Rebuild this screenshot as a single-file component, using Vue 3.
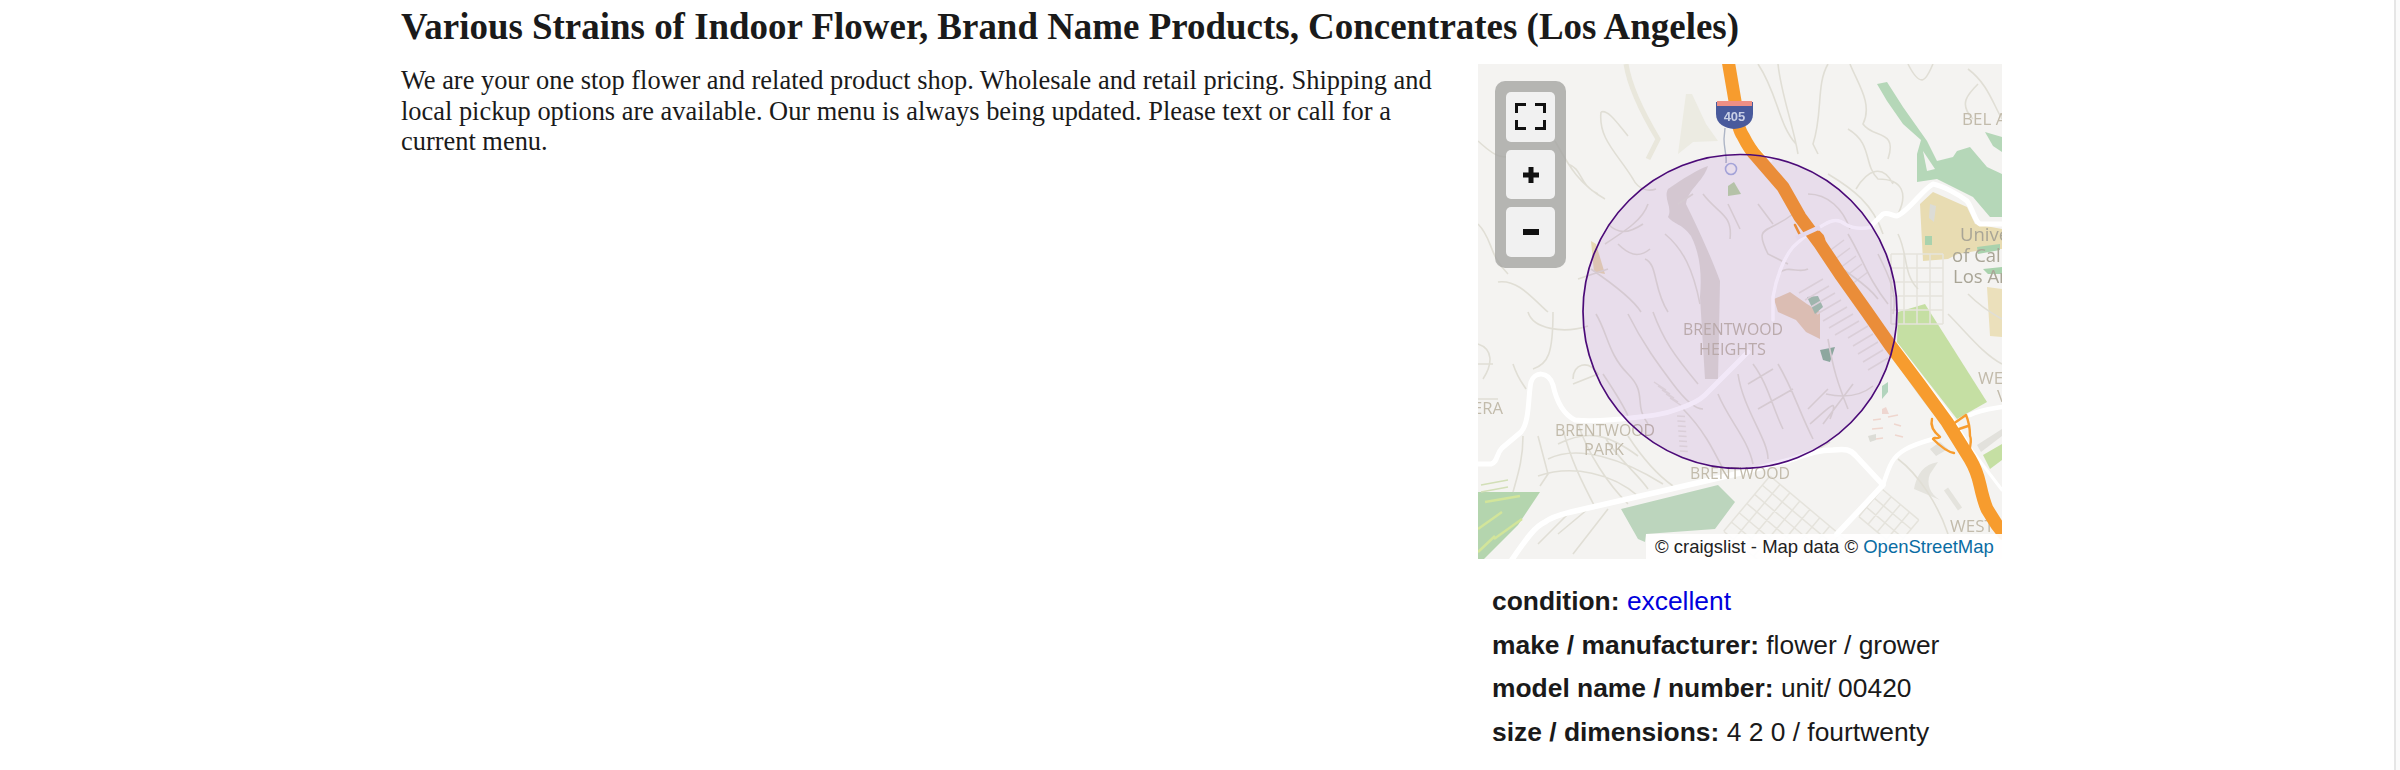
<script setup>
const attrs = [
  { k: 'condition:', v: 'excellent', link: true },
  { k: 'make / manufacturer:', v: 'flower / grower' },
  { k: 'model name / number:', v: 'unit/ 00420' },
  { k: 'size / dimensions:', v: '4 2 0 / fourtwenty' }
]

function grid(x0, y0, angle, cols, rows, stepA, stepB) {
  const a = (angle * Math.PI) / 180
  const c = Math.cos(a), s = Math.sin(a)
  const out = []
  const la = cols * stepA, lb = rows * stepB
  for (let i = 0; i <= cols; i++) {
    const x = x0 + c * i * stepA, y = y0 + s * i * stepA
    out.push(`M${x.toFixed(1)} ${y.toFixed(1)}L${(x - s * lb).toFixed(1)} ${(y + c * lb).toFixed(1)}`)
  }
  for (let j = 0; j <= rows; j++) {
    const x = x0 - s * j * stepB, y = y0 + c * j * stepB
    out.push(`M${x.toFixed(1)} ${y.toFixed(1)}L${(x + c * la).toFixed(1)} ${(y + s * la).toFixed(1)}`)
  }
  return out.join('')
}

function hatch(x, y, dx, dy, lx, ly, n) {
  let d = ''
  for (let i = 0; i < n; i++) {
    const a = x + dx * i, b = y + dy * i
    d += `M${a} ${b}L${a + lx} ${b + ly}`
  }
  return d
}

const streets = [
  grid(292, 412, 40, 9, 6, 13, 12),
  grid(404, 425, 40, 4, 3, 12, 12),
  grid(465, 190, 90, 5, 4, 14, 13),
  hatch(345, 215, 6, 7, -24, 14, 7),
  hatch(390, 262, 5, 8, -20, 12, 5),
  hatch(350, 188, 6, 8, 16, -12, 5),
  hatch(176, 318, 4, 4, 12, 8, 5),
  hatch(199, 352, 0.4, 5, 8, 0.5, 8)
].join('')

const hills = [
  'M0 77C15 90 20 98 50 90',
  'M77 77C90 100 100 120 127 135',
  'M123 48C120 75 140 90 155 115C160 125 170 128 178 125',
  'M123 48C130 45 140 60 150 72',
  'M0 160C15 175 10 190 30 210',
  'M20 218C40 215 55 235 70 248',
  'M100 215L130 205',
  'M90 100C105 105 100 120 120 130',
  'M127 180C150 165 165 155 170 140',
  'M187 170C205 185 215 205 222 240',
  'M113 205C135 220 155 235 163 248',
  'M167 195C180 200 175 225 190 248',
  'M225 130C240 150 255 150 252 175',
  'M250 140L262 165',
  'M200 140L215 130',
  'M140 180C150 190 160 195 172 185',
  'M130 160C140 170 150 170 165 160',
  'M280 0C300 30 300 60 318 80',
  'M300 0C303 30 315 60 320 90',
  'M350 0C338 20 345 50 335 80L340 90',
  'M372 0C380 20 395 40 385 60C395 75 420 65 410 95',
  'M370 65C395 80 385 100 400 115C425 115 430 130 420 150',
  'M415 120C405 100 390 105 378 125',
  'M430 0C445 30 450 10 455 0',
  'M500 20C490 30 480 40 495 55',
  'M490 5C510 20 515 40 524 55',
  'M330 130C350 130 365 145 372 165',
  'M350 110C375 125 395 140 405 170',
  'M315 150C290 170 275 160 290 190L310 200',
  'M280 140L295 160',
  'M350 190C365 210 385 215 400 235',
  'M370 170C385 195 390 215 410 240',
  'M300 210C310 200 320 210 330 205',
  'M420 170C430 190 425 210 440 225',
  'M400 190C410 210 420 230 415 250',
  'M0 280C15 285 15 300 5 315',
  'M50 248C55 265 85 270 110 262',
  'M75 248C75 290 70 300 55 305',
  'M0 300H15M0 335H20',
  'M35 300C40 315 45 320 48 325',
  'M95 315C95 300 110 295 120 310L95 320',
  'M118 250C130 270 130 290 150 310S155 340 170 360',
  'M150 250C165 280 180 300 195 320S220 345 225 345',
  'M175 248C185 275 195 290 220 320',
  'M125 310C135 325 145 340 150 352',
  'M80 380C110 365 130 370 160 392',
  'M70 395C100 380 145 395 185 420',
  'M60 412C95 400 135 410 160 432',
  'M100 360C110 390 130 420 150 440',
  'M85 365C92 395 105 420 118 445',
  'M128 375C140 395 160 410 170 425',
  'M150 372C165 395 178 410 195 422',
  'M45 372C45 395 40 410 35 428',
  'M60 372L70 410L62 422',
  'M80 470L110 445M95 490L130 445M60 480L90 450',
  'M205 345C225 365 235 385 245 405',
  'M260 310C265 345 290 375 290 395',
  'M240 330C250 355 270 375 275 400',
  'M300 300C315 325 320 345 335 375',
  'M275 300C290 320 295 345 305 365',
  'M350 275C355 305 360 320 370 345',
  'M332 360C350 345 362 330 352 355',
  'M350 325L330 345M375 320L345 360',
  'M270 320L295 305M280 345L315 325',
  'M348 330C370 335 385 330 395 322',
  'M340 385L352 378',
  'M420 300C440 330 455 350 470 365',
  'M470 250C490 270 505 290 524 300',
  'M490 230C505 245 515 250 524 255',
  'M420 395C440 410 460 440 470 470',
  'M500 410C505 430 515 450 524 470'
].join('')

const pink = 'M395 356L403 355M410 353L420 351M394 365L405 364M416 360L423 362M398 375L405 374M417 371L425 373'
</script>

<template>
  <div class="page">
    <main class="content">
      <h1 class="title">Various Strains of Indoor Flower, Brand Name Products, Concentrates (Los Angeles)</h1>
      <div class="columns">
        <section class="body">
          We are your one stop flower and related product shop. Wholesale and retail pricing. Shipping and local pickup options are available. Our menu is always being updated. Please text or call for a current menu.
        </section>
        <aside class="side">
          <div class="map">
            <svg class="tiles" width="524" height="495" viewBox="0 0 524 495">
              <defs>
                <filter id="soft" x="0" y="0" width="100%" height="100%"><feGaussianBlur stdDeviation="0.55" /></filter>
              </defs>
              <g filter="url(#soft)">
                <rect width="524" height="495" fill="#f4f3f1" />
                <!-- land use -->
                <path d="M399 20L409 18L425 43L449 77L459 97L475 93L479 87L492 83L509 103L524 110V153H512L495 133L469 120L459 115L439 118L439 90L443 76L425 60L409 37Z" fill="#b5d7b8" />
                <path d="M445 87L449 107L457 105Z" fill="#f4f3f1" />
                <path d="M507 68L524 73V88L515 82Z" fill="#b5d7b8" />
                <path d="M442 140L455 128L489 143L497 160L524 165V185H510L480 190L470 195L445 197Z" fill="#e8dcb2" />
                <path d="M509 223L524 225V273L512 272Z" fill="#ebe0bb" />
                <path d="M447 172H454V181H447ZM499 183L522 180V186L500 190ZM505 205L524 203V210L510 210Z" fill="#a9d2ad" />
                <path d="M452 140L458 142L456 158L451 154Z" fill="#dcdcd6" />
                <path d="M420 248L447 240L509 338L479 355L419 278Z" fill="#c5dfa3" />
                <path d="M505 391L524 380V396L512 405Z" fill="#c5dfa3" />
                <path d="M0 428L62 428L40 461L5 496H0Z" fill="#b4d5ae" />
                <path d="M7 438L42 432M0 465L24 448M16 475L44 455M0 488L17 472" stroke="#d2e59a" stroke-width="2.5" fill="none" />
                <path d="M3 421L30 416M3 428L30 423" stroke="#d2dfb7" stroke-width="1.5" fill="none" />
                <path d="M143 445L240 421L257 438L237 465L168 470L167 478L160 475Z" fill="#bcd5bd" />
                <path d="M296 235L312 228L329 240L342 248V275L328 268L318 256L300 248Z" fill="#e6d0b4" />
                <path d="M329 233L340 232L345 243L337 250Z" fill="#a4c7ad" />
                <path d="M342 286L357 283L352 298L345 296Z" fill="#90b89e" />
                <path d="M404 322L410 318L410 328L404 335Z" fill="#b2d4bd" />
                <path d="M113 177L118 180L127 210L116 208Z" fill="#e8d9b4" />
                <path d="M250 122L256 118L263 130L250 132Z" fill="#bcd6a8" />
                <path d="M148 0C152 25 165 50 180 75L170 95" stroke="#e9e7dc" stroke-width="5" fill="none" />
                <path d="M208 30L214 30L228 60L240 77L215 78L200 90Z" fill="#ecebe2" />
                <path d="M190 125C205 115 220 105 230 102C225 118 210 125 208 140C218 160 232 190 242 217L240 315H227L222 233C224 210 222 190 213 172C205 160 195 160 190 153C195 143 185 135 190 125Z" fill="#dedbd5" />
                <path d="M436 425C440 405 450 400 460 398L452 410C448 420 452 430 462 436Z" fill="#e4e3dd" />
                <path d="M452 385L462 378L470 385L458 392ZM499 381L524 365V372L503 388Z" fill="#e2e1dc" />
                <path d="M468 425L482 445" stroke="#e4e3dd" stroke-width="5" fill="none" />
                <path d="M390 372L398 370L398 376L392 378Z" fill="#dcdcd6" />
                <path d="M404 345L408 343L411 350H404Z" fill="#eed6d0" />
                <path :d="pink" stroke="#efd6ce" stroke-width="1.6" fill="none" />
                <!-- streets -->
                <path :d="streets" stroke="#e5e3dc" stroke-width="1.5" fill="none" />
                <path :d="hills" stroke="#e0ded5" stroke-width="1.6" fill="none" />
                <!-- white roads -->
                <g fill="none" stroke="#ffffff" stroke-linecap="round" stroke-linejoin="round">
                  <path d="M-2 400H13C20 398 18 390 24 384L43 368C52 358 50 330 53 318C56 308 70 306 75 321C78 335 85 350 97 356C115 358 128 356 143 355C170 352 185 351 200 345C215 340 222 336 227 331L270 288" stroke-width="5" />
                  <path d="M33 497C50 472 58 462 67 458C75 452 85 450 93 448L193 425L262 409L312 396C330 390 340 386 355 386C368 385 372 385 378 392L405 421L359 470" stroke-width="5.5" />
                  <path d="M405 421C408 412 410 405 414 398C420 388 430 382 455 375M492 351C502 346 512 345 524 343" stroke-width="4.5" />
                  <path d="M394 161L405 150C410 148 415 152 419 152C430 148 445 125 455 120C465 122 480 130 489 137C495 145 497 158 502 160H524" stroke-width="5" />
                  <path d="M394 163C385 165 375 165 367 160C358 153 350 158 342 163C330 168 322 177 315 183C305 195 298 215 295 233V256" stroke-width="3.5" />
                  <path d="M419 281L475 355L495 388L524 426" stroke-width="3" />
                  <path d="M270 72C276 82 285 92 293 97" stroke-width="3" />
                </g>
                <!-- map labels -->
                <g class="label" fill="#c2bbab">
                  <text x="205" y="271" textLength="100" lengthAdjust="spacingAndGlyphs">BRENTWOOD</text>
                  <text x="221" y="291" textLength="67" lengthAdjust="spacingAndGlyphs">HEIGHTS</text>
                  <text x="77" y="372" textLength="100" lengthAdjust="spacingAndGlyphs">BRENTWOOD</text>
                  <text x="106" y="391" textLength="40" lengthAdjust="spacingAndGlyphs">PARK</text>
                  <text x="212" y="415" textLength="100" lengthAdjust="spacingAndGlyphs">BRENTWOOD</text>
                  <text x="-5" y="350" textLength="30" lengthAdjust="spacingAndGlyphs">ERA</text>
                  <text x="484" y="61">BEL A</text>
                  <text x="500" y="320">WE</text>
                  <text x="519" y="338">V</text>
                  <text x="472" y="468">WEST</text>
                </g>
                <g class="label campus" fill="#a9a596">
                  <text x="482" y="177">Unive</text>
                  <text x="474" y="198">of Cali</text>
                  <text x="475" y="219">Los An</text>
                </g>
                <!-- freeway -->
                <g fill="none" stroke-linejoin="round" stroke-linecap="round">
                  <path d="M250 -4L257 37C258 52 260 65 265 72C270 82 274 88 279 93L305 123L322 153L342 180L362 210L389 248L412 281L442 321L469 358L492 395C498 405 500 412 502 421C504 430 506 438 509 445L519 461L526 470" stroke="#f79c2e" stroke-width="13" />
                  <path d="M317 161L322 171M341 168C346 172 348 178 344 182M325 163L332 172" stroke="#f79c2e" stroke-width="2.6" />
                  <path d="M454 355C452 362 456 368 462 373C458 376 456 372 455 375C462 382 470 388 476 389" stroke="#f79c2e" stroke-width="2.4" />
                  <path d="M475 360L488 351C491 358 492 366 492 372C494 376 492 380 492 385M478 366L490 362" stroke="#f79c2e" stroke-width="2.4" />
                  <path d="M318 174L342 163" stroke="#f1eff2" stroke-width="4.5" stroke-linecap="butt" />
                </g>
                <!-- interstate shield -->
                <path d="M247 64L246 75C246 85 249 92 248 99" stroke="#aeb6c6" stroke-width="1.4" fill="none" />
                <circle cx="253" cy="105" r="5.5" fill="none" stroke="#aab4dc" stroke-width="1.6" />
                <path d="M238 38H275V50C275 60 266 64 256 65C247 64 238 60 238 50Z" fill="#4a5a9c" />
                <rect x="239" y="37" width="35" height="5" fill="#ee8f85" />
                <text x="256.5" y="57" class="shield" text-anchor="middle" fill="#c8cfe6">405</text>
              </g>
              <circle cx="262" cy="247.5" r="157" fill="#6a00b0" fill-opacity="0.09" stroke="#4b0a78" stroke-width="1.7" />
            </svg>

            <div class="controls">
              <button class="ctl" aria-label="full screen">
                <svg width="31" height="27" viewBox="0 0 31 27" fill="none" stroke="#111" stroke-width="3">
                  <path d="M1.5 10V1.500H11M20 1.500H29.500V10M29.500 17V25.500H20M11 25.500H1.500V17" />
                </svg>
              </button>
              <button class="ctl" aria-label="zoom in">
                <svg width="16" height="16" viewBox="0 0 16 16" fill="#111"><path d="M5.500 0H10.500V5.500H16V10.500H10.500V16H5.500V10.500H0V5.500H5.500Z" /></svg>
              </button>
              <button class="ctl" aria-label="zoom out">
                <svg width="16" height="6" viewBox="0 0 16 6" fill="#111"><rect width="16" height="6" /></svg>
              </button>
            </div>

            <div class="attribution">© craigslist - Map data © <a class="osm">OpenStreetMap</a></div>
          </div>

          <div class="attrs">
            <p v-for="a in attrs" :key="a.k" class="attr">
              <b>{{ a.k }}</b> <a v-if="a.link" class="val-link">{{ a.v }}</a><span v-else>{{ a.v }}</span>
            </p>
          </div>
        </aside>
      </div>
    </main>
    <div class="scrollbar"></div>
  </div>
</template>

<style>
html, body { margin: 0; background: #fff; overflow: hidden; }
</style>

<style scoped>
.page {
  display: flex;
  height: 770px;
  overflow: hidden;
  background: #fff;
  color: #1a1a1a;
}
.content {
  flex: 1;
  padding: 4px 0 0 401px;
  min-width: 0;
}
.title {
  margin: 0 0 14px;
  font: bold 36.95px/46px "Liberation Serif", serif;
  white-space: nowrap;
}
.columns {
  display: flex;
}
.body {
  width: 1040px;
  margin-right: 37px;
  padding-top: 1px;
  font: 26.42px/30.5px "Liberation Serif", serif;
}
.side {
  width: 524px;
}
.map {
  position: relative;
  width: 524px;
  height: 495px;
  overflow: hidden;
}
.tiles {
  display: block;
}
.label text {
  font: 17px "Open Sans", sans-serif;
}
.campus text {
  font-size: 18.5px;
}
.tiles .shield {
  font: bold 13px "Liberation Sans", sans-serif;
}
.controls {
  position: absolute;
  left: 17px;
  top: 17px;
  box-sizing: border-box;
  width: 71px;
  height: 187px;
  padding: 11px;
  display: flex;
  flex-direction: column;
  gap: 8px;
  background: rgba(165, 165, 163, 0.8);
  border-radius: 10px;
}
.ctl {
  flex: 1;
  display: flex;
  align-items: center;
  justify-content: center;
  padding: 0;
  border: 0;
  border-radius: 5px;
  background: #f1f1f1;
}
.attribution {
  position: absolute;
  right: 0;
  bottom: 0;
  box-sizing: border-box;
  width: 356px;
  height: 25px;
  padding-left: 9px;
  background: rgba(255, 255, 255, 0.92);
  font: 18.5px/25px "Liberation Sans", sans-serif;
  white-space: nowrap;
  color: #222;
}
.osm {
  color: #0a6ca3;
}
.attrs {
  padding: 21px 0 0 14px;
  font: 26.4px/43.5px "Liberation Sans", sans-serif;
}
.attr {
  margin: 0;
  white-space: nowrap;
}
.val-link {
  color: #0000dd;
}
.scrollbar {
  flex: none;
  box-sizing: border-box;
  width: 6px;
  height: 770px;
  background: #fbfbfb;
  border-left: 2px solid #e6e6e6;
}
</style>
